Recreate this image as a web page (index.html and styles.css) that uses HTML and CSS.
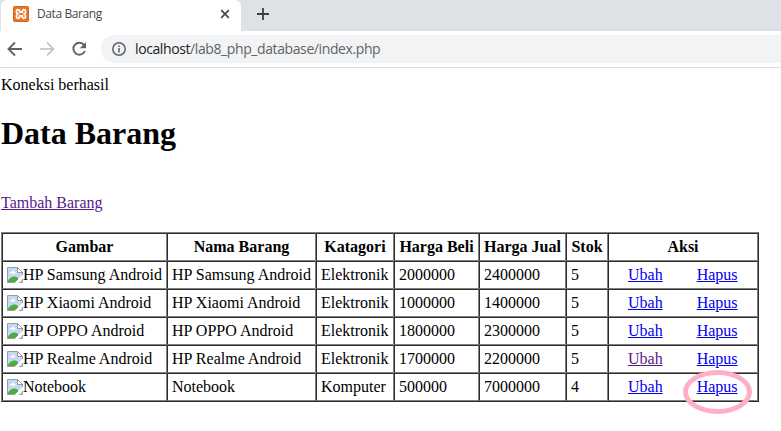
FILE: index.html
```
<!DOCTYPE html>
<html lang="id">
<head>
<meta charset="utf-8">
<title>Data Barang</title>
<link rel="stylesheet" href="styles.css">
</head>
<body>
<svg class="defs" width="0" height="0">
  <symbol id="broken" viewBox="0 0 16 16">
    <path d="M.5.5H10.5L15.500 5.500V15.500H.5Z" fill="#c5d8f5" stroke="#9c9c9c"/>
    <path d="M10.500 .5V5.500H15.500Z" fill="#fff" stroke="#9c9c9c"/>
    <path d="M3 6.500C3 5 4.200 4.800 4.800 4.800C5.200 3.300 7.300 3.500 7.500 5C8.500 5 8.700 6.500 8 6.500Z" fill="#fff"/>
    <path d="M1 15V13.500C4 9 8 8.500 11 11V15Z" fill="#4fac3c"/>
    <path d="M16 7.500L7.500 16H11.500L16 11.500Z" fill="#fff"/>
  </symbol>
</svg>
<header class="browser">
  <div class="tabs">
    <div class="edge"></div>
    <div class="tab">
      <svg class="favicon" width="16" height="16" viewBox="0 0 16 16"><rect x=".5" y=".5" width="15" height="15" rx="1" fill="#ee7623" stroke="#cf661f"/><path d="M5.200 3.700C3 3.700 2.700 6.800 4.800 8C2.700 9.200 3 12.300 5.200 12.300C6.800 12.300 6.700 10.300 6.700 9.800H9.300C9.300 10.300 9.200 12.300 10.800 12.300C13 12.300 13.300 9.200 11.200 8C13.300 6.800 13 3.700 10.800 3.700C9.200 3.700 9.300 5.700 9.300 6.200H6.700C6.700 5.700 6.800 3.700 5.200 3.700Z" fill="none" stroke="#fff" stroke-width="1.700"/></svg>
      <span class="tab-title">Data Barang</span>
      <svg class="close" width="10" height="10" viewBox="0 0 10 10"><path d="M1.200 1.200L8.800 8.800M8.800 1.200L1.200 8.800" stroke="#45494d" stroke-width="1.700"/></svg>
    </div>
    <svg class="plus" width="12" height="12" viewBox="0 0 12 12"><path d="M6 0V12M0 6H12" stroke="#3c4043" stroke-width="1.800"/></svg>
  </div>
  <div class="toolbar">
    <svg class="nav" width="16" height="16" viewBox="0 0 16 16"><path d="M15 8H2M8 1.500L1.500 8L8 14.500" fill="none" stroke="#5f6368" stroke-width="1.900"/></svg>
    <svg class="nav" width="16" height="16" viewBox="0 0 16 16"><path d="M1 8H14M8 1.500L14.500 8L8 14.500" fill="none" stroke="#bdbfc1" stroke-width="1.700"/></svg>
    <svg class="nav" width="16" height="16" viewBox="0 0 16 16"><path d="M13.200 4.200A6 6 0 1 0 13.900 10" fill="none" stroke="#5f6368" stroke-width="1.900"/><path d="M15 1V7.200H8.800Z" fill="#5f6368"/></svg>
    <div class="address">
      <svg class="info" width="14" height="14" viewBox="0 0 14 14"><circle cx="7" cy="7" r="6.200" fill="none" stroke="#5f6368" stroke-width="1.500"/><path d="M7 6V10.500M7 3.500V5" stroke="#5f6368" stroke-width="1.600"/></svg>
      <span class="url"><b>localhost</b>/lab8_php_database/index.php</span>
    </div>
  </div>
</header>
<main>
  <div class="status">Koneksi berhasil</div>
  <h1>Data Barang</h1>
  <a class="add visited" href="#">Tambah Barang</a>
  <table border="1" cellspacing="0" cellpadding="4">
    <colgroup><col class="c1"><col class="c2"><col class="c3"><col class="c4"><col class="c5"><col class="c6"><col class="c7"></colgroup>
    <tr><th>Gambar</th><th>Nama Barang</th><th>Katagori</th><th>Harga Beli</th><th>Harga Jual</th><th>Stok</th><th>Aksi</th></tr>
    <tr><td><svg class="broken"><use href="#broken"/></svg>HP Samsung Android</td><td>HP Samsung Android</td><td>Elektronik</td><td>2000000</td><td>2400000</td><td>5</td><td class="actions"><a href="#">Ubah</a><a href="#">Hapus</a></td></tr>
    <tr><td><svg class="broken"><use href="#broken"/></svg>HP Xiaomi Android</td><td>HP Xiaomi Android</td><td>Elektronik</td><td>1000000</td><td>1400000</td><td>5</td><td class="actions"><a href="#">Ubah</a><a href="#">Hapus</a></td></tr>
    <tr><td><svg class="broken"><use href="#broken"/></svg>HP OPPO Android</td><td>HP OPPO Android</td><td>Elektronik</td><td>1800000</td><td>2300000</td><td>5</td><td class="actions"><a href="#">Ubah</a><a href="#">Hapus</a></td></tr>
    <tr><td><svg class="broken"><use href="#broken"/></svg>HP Realme Android</td><td>HP Realme Android</td><td>Elektronik</td><td>1700000</td><td>2200000</td><td>5</td><td class="actions"><a class="visited" href="#">Ubah</a><a href="#">Hapus</a></td></tr>
    <tr><td><svg class="broken"><use href="#broken"/></svg>Notebook</td><td>Notebook</td><td>Komputer</td><td>500000</td><td>7000000</td><td>4</td><td class="actions"><a href="#">Ubah</a><span class="marked"><a href="#">Hapus</a><i class="ring"></i></span></td></tr>
  </table>
</main>
</body>
</html>
```
FILE: styles.css
```
* { box-sizing: border-box; }
body { margin: 0; background: #fff; color: #000; font: 16px/18px "Liberation Serif", serif; }
svg { display: block; flex: none; }
.defs { position: absolute; }

.browser { height: 68px; border-bottom: 1px solid #dadce0; }
.tabs { display: flex; height: 31px; background: #dee1e6; }
.edge { width: 1px; height: 26px; }
.tab { display: flex; align-items: center; width: 240px; height: 31px; padding: 0 12px 3px; background: #fff; border-radius: 6px 6px 0 0; }
.tab-title { margin-left: 8px; font: 12px/16px "Open Sans", sans-serif; color: #45494d; letter-spacing: -0.4px; }
.close { margin-left: auto; margin-right: -1px; }
.plus { margin: 8px 0 0 16px; }
.toolbar { display: flex; align-items: center; height: 36px; padding-left: 7px; gap: 16px; }
.address { display: flex; align-items: center; flex: 1; height: 28px; margin-left: -2px; padding-left: 11px; background: #f1f3f4; border-radius: 14px 0 0 14px; }
.url { margin-left: 9px; font: 14px/20px "Open Sans", sans-serif; color: #5f6368; letter-spacing: -0.4px; }
.url b { font-weight: 400; color: #202124; }

main { height: 363px; padding: 8px 0 0 1px; }
.status { height: 18px; }
h1 { margin: 21px 0; font-size: 32px; line-height: 37px; }
.add { display: block; width: max-content; margin-top: 42px; }
a { color: #0000ee; }
a.visited { color: #551a8b; }

table { width: 758px; margin-top: 20px; table-layout: fixed; color: #000; border-color: #808080; overflow: visible; }
th, td { height: 28px; white-space: nowrap; }
.c1 { width: 165px; }
.c2 { width: 149px; }
.c3 { width: 78px; }
.c4 { width: 85px; }
.c5 { width: 87px; }
.c6 { width: 42px; }
.c7 { width: 150px; }
.broken { display: inline-block; width: 16px; height: 16px; vertical-align: -3px; }
.actions { padding-left: 19px; }
.actions a { display: inline-block; }
.actions > :first-child { width: max-content; margin-right: 34px; }
.marked { position: relative; display: inline-block; }
.ring { position: absolute; left: -14px; top: -8px; width: 69px; height: 44px; border: 5px solid #ffaec9; border-radius: 50%; }
```
